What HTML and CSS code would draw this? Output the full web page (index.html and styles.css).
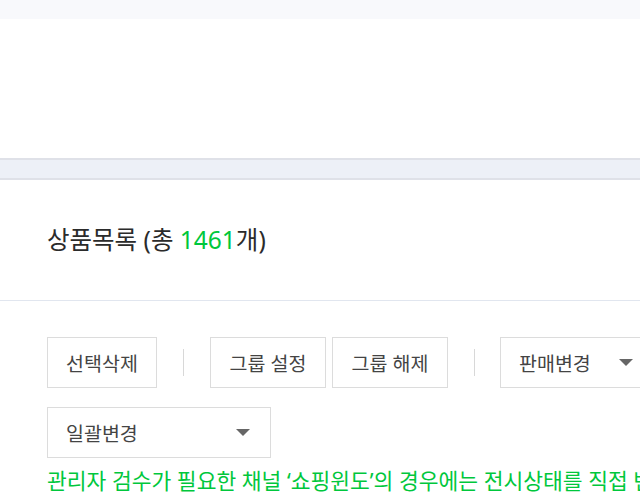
FILE: index.html
```html
<!DOCTYPE html>
<html lang="ko">
<head>
    <meta charset="UTF-8">
    <meta name="viewport" content="width=device-width, initial-scale=1.0">
    <title>상품목록</title>
    <link rel="stylesheet" href="styles.css">
</head>
<body>
    <div class="top-strip"></div>
    <div class="filter-area"></div>
    <div class="band"></div>

    <div class="list-header">
        <h2 class="list-title">상품목록 (총 <span class="count">1461</span>개)</h2>
    </div>

    <div class="toolbar">
        <div class="tool-row">
            <button class="btn btn-delete">선택삭제</button>
            <span class="sep"></span>
            <button class="btn btn-group">그룹 설정</button>
            <button class="btn btn-group btn-ungroup">그룹 해제</button>
            <span class="sep"></span>
            <button class="select select-sale">판매변경 <span class="caret"></span></button>
        </div>
        <div class="tool-row">
            <button class="select select-bulk">일괄변경 <span class="caret"></span></button>
        </div>
        <p class="notice">관리자 검수가 필요한 채널 ‘쇼핑윈도’의 경우에는 전시상태를 직접 변경할 수 없습니다.</p>
    </div>
</body>
</html>
```

FILE: styles.css
```css
html, body {
    margin: 0;
    padding: 0;
    background: #fff;
    overflow: hidden;
}

body {
    font-family: "Noto Sans", "Noto Sans CJK KR", sans-serif;
    color: #333;
    width: 640px;
    height: 495px;
}

.top-strip {
    height: 19px;
    background-color: #f8f9fc;
}

.filter-area {
    height: 139px;
}

.band {
    height: 18px;
    background-color: #edf0f7;
    border-top: 2px solid #dfe1e8;
    border-bottom: 2px solid #dfe1e8;
}

.list-header {
    padding: 44px 47px;
    border-bottom: 1px solid #e1e6ef;
}

.list-title {
    margin: 0;
    font-size: 24.5px;
    font-weight: normal;
    line-height: 32px;
    color: #2b2b2b;
    white-space: nowrap;
}

.count {
    color: #00c73c;
}

.toolbar {
    padding: 36px 0 0 47px;
}

.tool-row {
    display: flex;
    align-items: center;
    margin-bottom: 19px;
    white-space: nowrap;
}

.btn,
.select {
    height: 51px;
    background: #fff;
    border: 1px solid #dcdcdc;
    font-family: inherit;
    font-size: 19.5px;
    color: #444;
    padding: 0 16px;
    box-sizing: border-box;
    cursor: pointer;
    flex-shrink: 0;
}

.btn-delete {
    width: 110px;
}

.btn-group {
    width: 116px;
}

.btn-ungroup {
    margin-left: 6px;
}

.sep {
    width: 1px;
    height: 27px;
    background-color: #d8d8d8;
    margin: 0 26px;
    flex-shrink: 0;
}

.select {
    display: flex;
    align-items: center;
    justify-content: space-between;
    text-align: left;
    padding-left: 18px;
}

.select-sale {
    width: 150px;
    margin-left: -1px;
}

.select-bulk {
    width: 224px;
    padding-right: 20px;
}

.caret {
    width: 0;
    height: 0;
    border-left: 7px solid transparent;
    border-right: 7px solid transparent;
    border-top: 7px solid #666;
}

.notice {
    margin: -11px 0 0;
    font-size: 21.5px;
    line-height: 29px;
    color: #00c73c;
    white-space: nowrap;
}
```
